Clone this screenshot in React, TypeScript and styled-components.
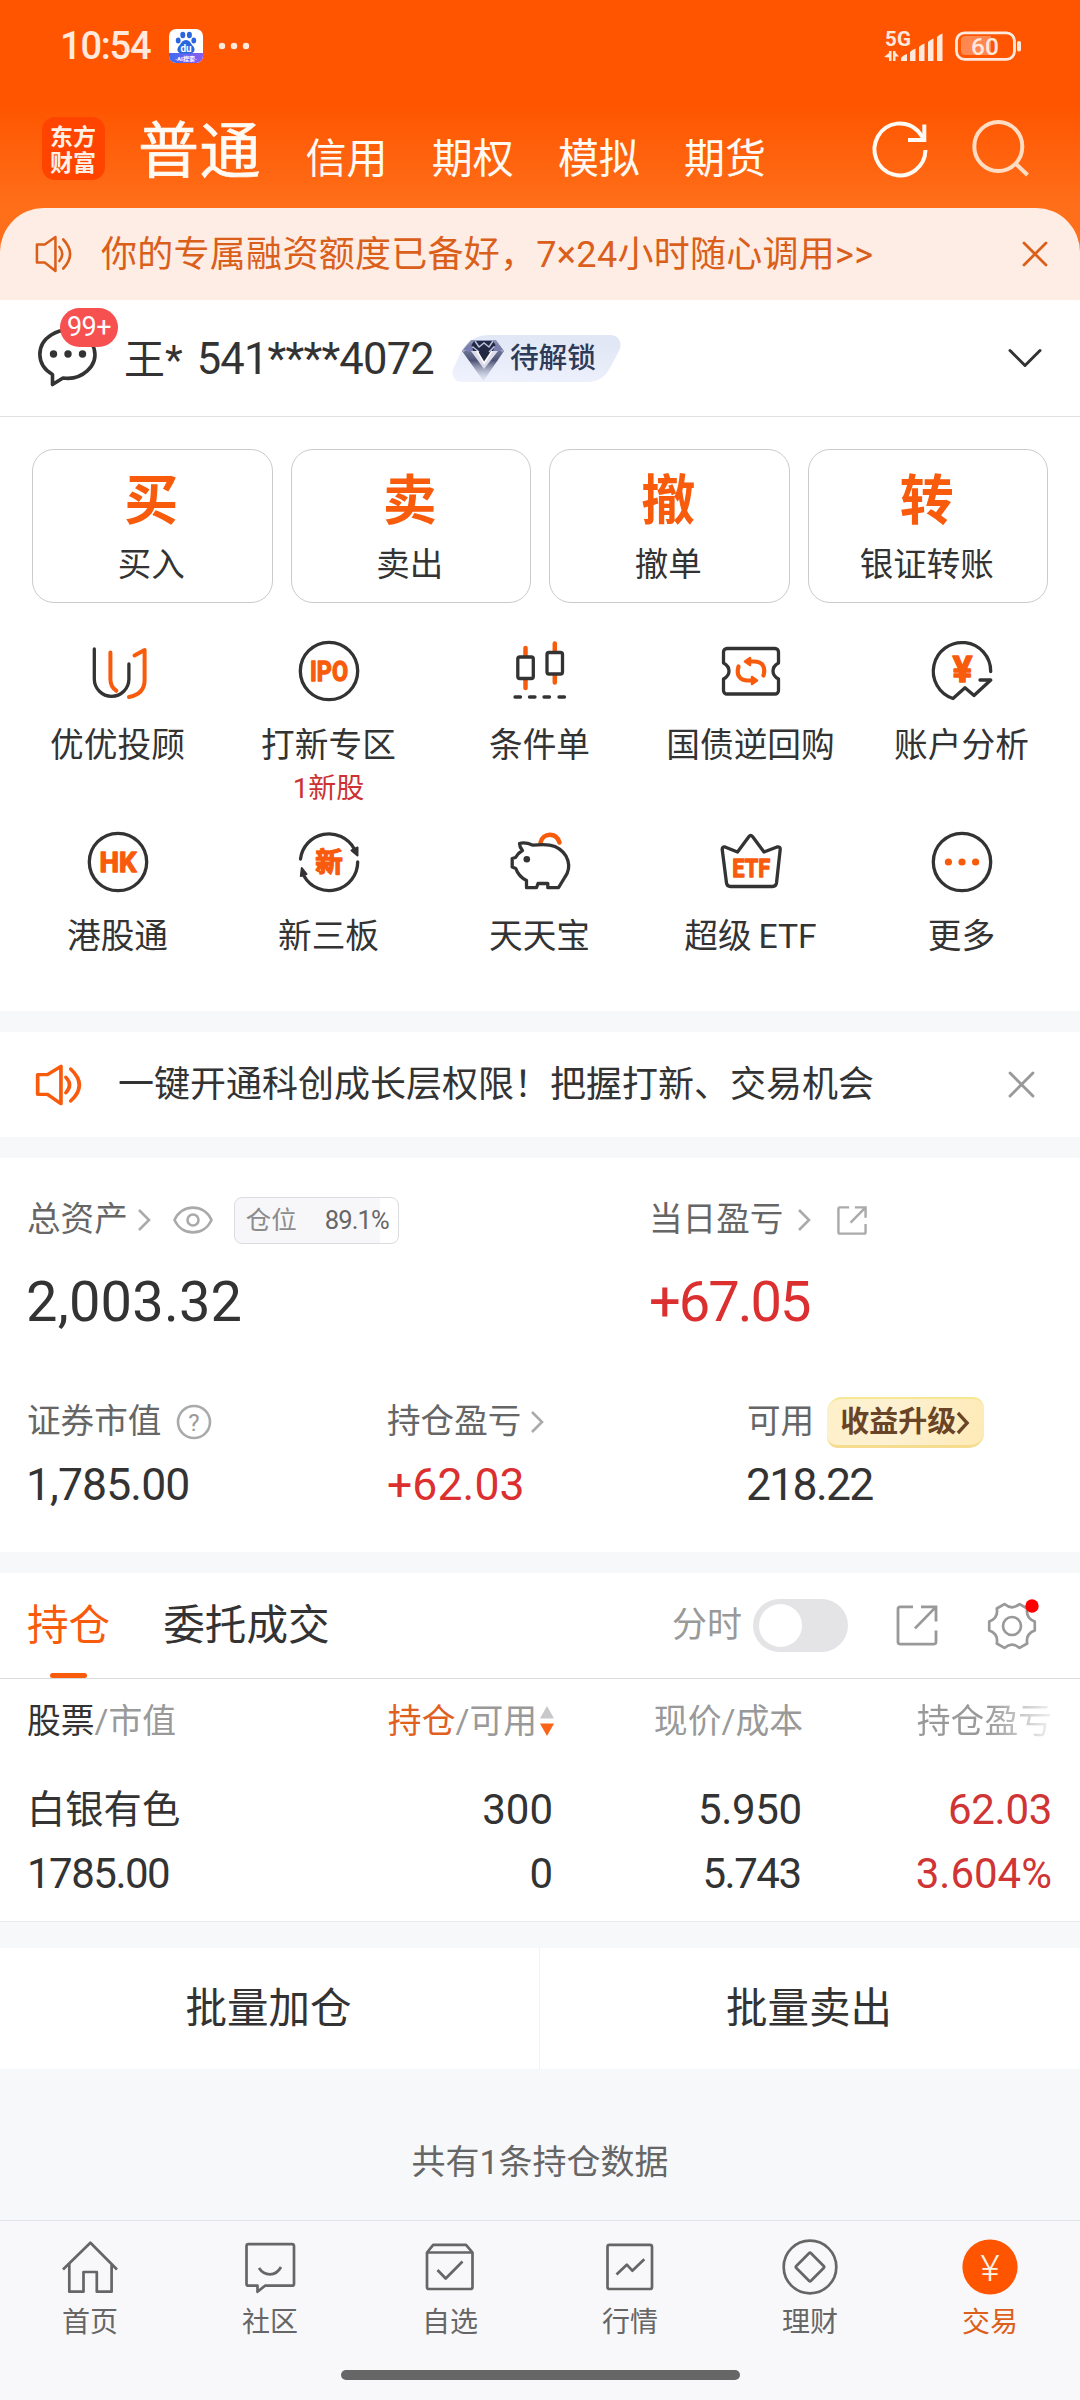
import React from 'react';
import styled, { createGlobalStyle } from 'styled-components';

const ORANGE = '#f85b0c';
const INK = '#333333';
const GRAY = '#666666';
const LIGHT = '#999999';
const RED = '#dc2f2f';
const FONT = `Roboto, "Noto Sans CJK SC", sans-serif`;

const GlobalStyle = createGlobalStyle`
  * { box-sizing: border-box; }
  body { margin: 0; background: #f7f8fa; }
`;

const Page = styled.main`
  width: 1080px;
  height: 2400px;
  display: flex;
  flex-direction: column;
  background: #f7f8fa;
  font-family: ${FONT};
  line-height: 1.3;
  color: ${INK};
  overflow: hidden;
  white-space: nowrap;
`;

const Icon = styled.svg<{ $w: number; $h: number; $ml?: number; $mt?: number }>`
  display: block;
  flex: none;
  width: ${p => p.$w}px;
  height: ${p => p.$h}px;
  margin-left: ${p => p.$ml ?? 0}px;
  margin-top: ${p => p.$mt ?? 0}px;
  overflow: visible;
  fill: none;
`;

const SvgText = styled.text<{ $size: number; $weight?: number }>`
  font-family: ${FONT};
  font-size: ${p => p.$size}px;
  font-weight: ${p => p.$weight ?? 700};
  text-anchor: middle;
`;

/* ---------- top area ---------- */

const Top = styled.header`
  flex: none;
  height: 300px;
  background: linear-gradient(#ff5500 0, #ff5500 104px, #ff6f1a 208px, #ff6d18 250px);
`;

const StatusBar = styled.div`
  height: 92px;
  padding: 0 58px 0 60px;
  display: flex;
  align-items: center;
  color: #ffe9dd;
`;

const Clock = styled.span`
  width: 109px;
  font-size: 38px;
  font-weight: 500;
  letter-spacing: -1.2px;
  line-height: 46px;
`;

const Spacer = styled.span`
  flex: 1;
`;

const NavRow = styled.nav`
  height: 116px;
  display: flex;
  align-items: flex-start;
  padding: 24px 50px 0 42px;
  color: #fffaf3;
`;

const Logo = styled.div`
  width: 63px;
  height: 63px;
  margin-top: 1px;
  padding: 5px 8px;
  border-radius: 13px;
  background: #ff4400;
  font: 700 23px/26px "Noto Sans CJK SC", sans-serif;
  white-space: normal;
  word-break: break-all;
  color: #fff0e6;
`;

const NavTabs = styled.div`
  display: flex;
  align-items: baseline;
  margin-left: 33px;
  margin-top: 2px;
  height: 66px;
`;

const NavTab = styled.span<{ $active?: boolean }>`
  width: ${p => (p.$active ? 167.5 : 126.2)}px;
  font-size: ${p => (p.$active ? 61 : 41)}px;
  font-weight: 400;
  -webkit-text-stroke: ${p => (p.$active ? 0.7 : 0)}px currentColor;
  letter-spacing: ${p => (p.$active ? 0.5 : 0)}px;
  line-height: 68px;
`;

const PromoBar = styled.div`
  height: 92px;
  padding: 0 33px 0 34px;
  border-radius: 44px 44px 0 0;
  background: #feede5;
  display: flex;
  align-items: center;
  color: #da5f1b;
`;

const NoticeText = styled.span<{ $ml: number; $ls?: number; $pt?: number }>`
  margin-left: ${p => p.$ml}px;
  padding-top: ${p => p.$pt ?? 0}px;
  font-size: 36px;
  line-height: 48px;
  letter-spacing: ${p => p.$ls ?? 0}px;
`;

/* ---------- account ---------- */

const AccountRow = styled.section`
  flex: none;
  height: 117px;
  padding: 0 38px 0 38px;
  background: #fff;
  border-bottom: 1px solid #e1e1e1;
  display: flex;
  align-items: center;
`;

const Chat = styled.div`
  position: relative;
  width: 64px;
  height: 60px;
`;

const Badge = styled.span`
  position: absolute;
  left: 22px;
  top: -20px;
  width: 58px;
  height: 39px;
  border-radius: 20px;
  background: #f75050;
  color: #fff;
  font-size: 27px;
  line-height: 39px;
  text-align: center;
  letter-spacing: -0.5px;
`;

const AccountName = styled.span`
  margin-left: 22px;
  padding-top: 3px;
  font-size: 41px;
  line-height: 56px;
`;

const AccountNumber = styled.span`
  margin-left: 4px;
  padding-top: 3px;
  font-size: 43.5px;
  letter-spacing: -0.8px;
  line-height: 56px;
`;

const VipTag = styled.div`
  position: relative;
  width: 170px;
  height: 47px;
  margin-left: 18px;
  display: flex;
  align-items: center;
  padding-left: 58px;
`;

const VipShape = styled(Icon)`
  position: absolute;
  left: 0;
  top: 0;
`;

const VipText = styled.span`
  position: relative;
  font-size: 28.7px;
  font-weight: 500;
  line-height: 40px;
  color: #2d3a58;
`;

/* ---------- trade actions ---------- */

const Actions = styled.section`
  flex: none;
  height: 594px;
  background: #fff;
  padding-top: 32px;
`;

const CardRow = styled.div`
  display: grid;
  grid-template-columns: repeat(4, 1fr);
  gap: 18px;
  padding: 0 32px;
`;

const Card = styled.button`
  height: 154px;
  border: 1px solid #cbcbcb;
  border-radius: 22px;
  background: #fff;
  padding: 19px 2px 0 0;
  display: flex;
  flex-direction: column;
  align-items: center;
  font-family: ${FONT};
  color: ${INK};
`;

const CardGlyph = styled.span`
  font-size: 54px;
  font-weight: 700;
  line-height: 66px;
  color: ${ORANGE};
`;

const CardLabel = styled.span`
  margin-top: 8px;
  font-size: 33.5px;
  line-height: 44px;
`;

const ShortcutGrid = styled.div`
  display: grid;
  grid-template-columns: repeat(5, 211px);
  grid-auto-rows: 191px;
  padding: 33px 0 0 12px;
`;

const Shortcut = styled.div`
  display: flex;
  flex-direction: column;
  align-items: center;
`;

const ShortcutLabel = styled.span`
  margin-top: 18px;
  font-size: 33.7px;
  line-height: 44px;
`;

const ShortcutNote = styled.span`
  margin-top: 1px;
  font-size: 28px;
  line-height: 40px;
  color: #cc3232;
`;

/* ---------- notice ---------- */

const Notice = styled.section`
  flex: none;
  height: 105px;
  margin: 21px 0;
  padding: 0 46px 0 34px;
  background: #fff;
  display: flex;
  align-items: center;
`;

/* ---------- assets ---------- */

const Assets = styled.section`
  flex: none;
  height: 394px;
  background: #fff;
  padding: 37px 28px 0 27px;
`;

const AssetsTop = styled.div`
  display: grid;
  grid-template-columns: 622px 1fr;
`;

const AssetsBottom = styled.div`
  display: grid;
  grid-template-columns: 360px 360px 1fr;
  margin-top: 59px;
`;

const LabelRow = styled.div<{ $h: number }>`
  height: ${p => p.$h}px;
  display: flex;
  align-items: center;
  font-size: 33.6px;
  color: ${GRAY};
`;

const Amount = styled.div<{ $size: number; $up?: boolean; $ls?: number; $mt: number }>`
  margin-top: ${p => p.$mt}px;
  margin-left: ${p => (p.$up ? 0 : -1)}px;
  font-size: ${p => p.$size}px;
  font-weight: 400;
  line-height: ${p => p.$size + 12}px;
  letter-spacing: ${p => p.$ls ?? 0}px;
  color: ${p => (p.$up ? RED : INK)};
`;

const PositionBox = styled.div`
  width: 165px;
  height: 47px;
  margin-left: 21px;
  border: 1px solid #dcdce0;
  border-radius: 8px;
  background: linear-gradient(90deg, #f7f7fa 89.1%, #fff 89.1%);
  display: flex;
  align-items: center;
  justify-content: space-between;
  padding: 1px 9px 0 11px;
  font-size: 25.5px;
  color: #8c8c8c;
`;

const PositionValue = styled.span`
  color: ${GRAY};
  letter-spacing: -0.9px;
`;

const UpgradeTag = styled.div`
  width: 157px;
  height: 51px;
  margin-left: 13px;
  padding: 2px 0 0 13px;
  border-radius: 15px 11px 15px 11px;
  border-bottom: 3px solid #f5dc8e;
  border-top: 2px solid #f6e795;
  background: linear-gradient(100deg, #fdf0c9, #fdf1d3 40%, #feeab6 100%);
  display: flex;
  align-items: center;
  font-size: 29px;
  font-weight: 700;
  color: #6a4426;
`;

/* ---------- holdings ---------- */

const Holdings = styled.section`
  flex: none;
  height: 349px;
  margin-top: 21px;
  background: #fff;
  border-bottom: 1px solid #e9eaec;
`;

const HoldingTabs = styled.div`
  height: 106px;
  padding: 0 44px 0 27px;
  border-bottom: 1px solid #d9dadb;
  display: flex;
  align-items: center;
`;

const HoldingTab = styled.span<{ $active?: boolean }>`
  position: relative;
  height: 105px;
  margin-right: 53px;
  font-size: 41.6px;
  line-height: 105px;
  color: ${p => (p.$active ? ORANGE : INK)};
`;

const Underline = styled.i`
  position: absolute;
  left: 23px;
  bottom: 0;
  width: 37px;
  height: 5px;
  border-radius: 3px;
  background: ${ORANGE};
`;

const SwitchLabel = styled.span`
  font-size: 35px;
  color: ${LIGHT};
`;

const Switch = styled.span`
  width: 95px;
  height: 53px;
  margin-left: 11px;
  padding: 5px 6px;
  border-radius: 27px;
  background: #e4e4e6;

  &::before {
    content: '';
    display: block;
    width: 43px;
    height: 43px;
    border-radius: 50%;
    background: #fff;
  }
`;

const TableRow = styled.div<{ $h: number; $size: number }>`
  height: ${p => p.$h}px;
  padding: 0 28px 0 27px;
  display: grid;
  grid-template-columns: 1fr 249px 249px 249px;
  align-items: center;
  font-size: ${p => p.$size}px;
`;

const HeadCell = styled.span<{ $right?: boolean }>`
  display: flex;
  align-items: center;
  justify-content: ${p => (p.$right ? 'flex-end' : 'flex-start')};
  color: ${LIGHT};
`;

const Fade = styled.span`
  background: linear-gradient(90deg, ${LIGHT} 52%, #eeeeee 98%);
  background-clip: text;
  -webkit-background-clip: text;
  color: transparent;
`;

const Dark = styled.span<{ $accent?: boolean }>`
  color: ${p => (p.$accent ? '#e0601e' : INK)};
`;

const StockName = styled.span`
  font-size: 38.3px;
  line-height: 36px;
`;

const NumberCell = styled.span<{ $left?: boolean; $up?: boolean; $ls?: number }>`
  text-align: ${p => (p.$left ? 'left' : 'right')};
  line-height: 36px;
  letter-spacing: ${p => p.$ls ?? 0}px;
  margin-right: ${p => (p.$up ? 0 : 1 - (p.$ls ?? 0))}px;
  color: ${p => (p.$up ? '#d03535' : INK)};
`;

const BatchRow = styled.section`
  flex: none;
  height: 121px;
  margin-top: 26px;
  background: #fff;
  display: grid;
  grid-template-columns: 1fr 1fr;
`;

const BatchButton = styled.button`
  border: 0;
  background: none;
  font-family: ${FONT};
  font-size: 41.5px;
  line-height: 54px;
  color: ${INK};
  padding: 1px 2px 0 0;

  &:first-child {
    border-right: 1px solid #f3f3f5;
  }
`;

const Summary = styled.p`
  margin: 0;
  height: 151px;
  padding-top: 68px;
  text-align: center;
  font-size: 34px;
  line-height: 50px;
  color: ${GRAY};
`;

/* ---------- bottom bar ---------- */

const BottomBar = styled.footer`
  flex: none;
  height: 180px;
  border-top: 1px solid #e1e4e6;
  background: #f8f8fa;
  display: flex;
  flex-direction: column;
  align-items: center;
`;

const BottomTabs = styled.div`
  width: 100%;
  height: 149px;
  display: grid;
  grid-template-columns: repeat(6, 1fr);
`;

const BottomTab = styled.div<{ $active?: boolean }>`
  display: flex;
  flex-direction: column;
  align-items: center;
  padding-top: 16px;
  font-size: 28px;
  line-height: 38px;
  color: ${p => (p.$active ? '#dd5f1c' : GRAY)};
`;

const BottomLabel = styled.span`
  margin-top: 7px;
`;

const HomeIndicator = styled.div`
  width: 399px;
  height: 10px;
  border-radius: 5px;
  background: #666;
`;

/* ---------- icons ---------- */

const Speaker = ({ w, h, sw, color }: { w: number; h: number; sw: number; color: string }) => (
  <Icon $w={w} $h={h} viewBox="0 0 40 40" preserveAspectRatio="none" stroke={color} strokeWidth={sw} strokeLinejoin="round" strokeLinecap="round">
    <path d="M3 10.5h8L22 3v34l-11-8.5H3z" />
    <path d="M26 13q6 7 0 14" />
    <path d="M30 5.5q14 14.5 0 29" />
  </Icon>
);

const Cross = ({ size, color }: { size: number; color: string }) => (
  <Icon $w={size} $h={size} viewBox="0 0 24 24" stroke={color} strokeWidth="2.8" strokeLinecap="round">
    <path d="M1 1L23 23M23 1L1 23" />
  </Icon>
);

const Chevron = ({ ml, color = '#aaaaaa', sw = 2.6, w = 12 }: { ml: number; color?: string; sw?: number; w?: number }) => (
  <Icon $w={w} $h={22} $ml={ml} viewBox="0 0 12 22" preserveAspectRatio="none" stroke={color} strokeWidth={sw}>
    <path d="M1 1L11 11L1 21" />
  </Icon>
);

const BaiduIcon = () => (
  <Icon $w={34} $h={34} viewBox="0 0 34 34">
    <defs>
      <linearGradient id="bd" x1="0" x2="1">
        <stop offset="0" stopColor="#3f6df2" />
        <stop offset="1" stopColor="#8a5cf0" />
      </linearGradient>
    </defs>
    <rect width="34" height="34" rx="7" fill="#fff" />
    <path d="M0 24h34v3a7 7 0 0 1-7 7H7a7 7 0 0 1-7-7z" fill="url(#bd)" />
    <g fill="#2a66e0">
      <ellipse cx="13.8" cy="6" rx="2.5" ry="3.3" />
      <ellipse cx="20.4" cy="6" rx="2.5" ry="3.3" />
      <ellipse cx="9.2" cy="11.6" rx="2.4" ry="3" />
      <ellipse cx="24.8" cy="11.6" rx="2.4" ry="3" />
      <path d="M17 11c4 0 5 4 7 6 3 3 1.500 7.500-3 7.500h-8c-4.500 0-6-4.500-3-7.500 2-2 3-6 7-6z" />
    </g>
    <SvgText x="17" y="22.500" $size={10} fill="#fff">du</SvgText>
    <SvgText x="17" y="32" $size={6} fill="#fff">·AI搜索·</SvgText>
  </Icon>
);

const SignalIcon = () => (
  <Icon $w={60} $h={34} viewBox="882 28 60 34" fill="currentColor">
    <SvgText x="897" y="44.500" $size={20.5} fill="currentColor" textLength="26">5G</SvgText>
    <g fill="currentColor">
      <path d="M888 50h2.500v10H888zM883 56l5-4v4.500zM892 50h2.500v10H892zM894 51l4 4.500h-4z" />
      <path d="M900 57q2-3 6-4v7h-6zM909 51q2-2.500 5.500-3.500V60H909zM918 46q2-2.500 5.500-3.500V60H918zM927 41q2-2.500 5.500-3.500V60H927zM936 36q2-2.500 5.500-3.500V60H936z" />
    </g>
  </Icon>
);

const BatteryIcon = () => (
  <Icon $w={67} $h={30} $ml={12} viewBox="954 31 67 30">
    <rect x="955.5" y="32.800" width="58" height="26.500" rx="8" stroke="currentColor" strokeWidth="2.800" />
    <path d="M964 36h26v19h-26a4 4 0 0 1-4-4V40a4 4 0 0 1 4-4z" fill="#ff8750" />
    <rect x="1016" y="41" width="4" height="10.500" rx="1.800" fill="currentColor" />
    <SvgText x="984" y="54.500" $size={24.5} $weight={500} fill="currentColor">60</SvgText>
  </Icon>
);

const VipDiamond = () => (
  <VipShape $w={170} $h={47} viewBox="0 0 170 47">
    <defs>
      <linearGradient id="vip" x1="0" x2="0.3" y1="1" y2="0">
        <stop offset="0" stopColor="#f0f3fe" />
        <stop offset="1" stopColor="#e1e7f5" />
      </linearGradient>
      <linearGradient id="gem" x1="0" x2="0" y1="0" y2="1">
        <stop offset="0" stopColor="#8f98bd" />
        <stop offset="0.5" stopColor="#4d5374" />
        <stop offset="1" stopColor="#cfd4ea" stopOpacity="0.3" />
      </linearGradient>
    </defs>
    <path d="M37 0H158C167 0 171 8 167 16L158 33C153 42 146 47 135 47H10C2 47-2 40 2 32L9 17C14 6 25 0 37 0z" fill="url(#vip)" />
    <path d="M19 5h25l8 11L31.500 46 10 16z" fill="url(#gem)" />
    <path d="M22 6h19l5 8-14 14-15-14z" fill="#232943" />
    <path d="M23 6l4 6 5-4 5 4 4-6M11 16l10-4 6 5M51 16l-9-4-5 5" stroke="#b9c1de" strokeWidth="1.500" />
    <path d="M11 15l8-6 3 9zM51 15l-7-6-4 9z" fill="#7a7fb0" />
    <path d="M19 16h6l7 12 8-12h6L32 34z" fill="#dcdcea" />
    <path d="M25 16l7 12 8-12" stroke="#fff" strokeWidth="1.500" />
  </VipShape>
);

const External = ({ w, h, ml, color, sw }: { w: number; h: number; ml: number; color: string; sw: number }) => (
  <Icon $w={w} $h={h} $ml={ml} viewBox="0 0 42 42" preserveAspectRatio="none" stroke={color} strokeWidth={sw}>
    <path d="M17 2H4a2 2 0 0 0-2 2V38a2 2 0 0 0 2 2H38a2 2 0 0 0 2-2V26" />
    <path d="M25 2H40V17M39 3L19 24" />
  </Icon>
);

const polar = (r: number, deg: number) =>
  `${(24 + r * Math.cos((deg * Math.PI) / 180)).toFixed(2)} ${(24 + r * Math.sin((deg * Math.PI) / 180)).toFixed(2)}`;

const gearPath =
  [0, 60, 120, 180, 240, 300]
    .map((a, i) => `${i ? 'L' : 'M'}${polar(23.2, a - 11)}L${polar(23.2, a + 11)}Q${polar(15.5, a + 30)} ${polar(23.2, a + 49)}`)
    .join('') + 'Z';

const shortcutIcon = (content: React.ReactNode) => (
  <Icon $w={70} $h={70} viewBox="0 0 70 70" stroke={INK} strokeWidth="3.300" strokeLinecap="round" strokeLinejoin="round">
    {content}
  </Icon>
);

const Word = styled(SvgText)`
  fill: ${ORANGE};
  stroke: ${ORANGE};
  stroke-width: 1.3;
`;

const shortcuts = [
  {
    label: '优优投顾',
    icon: (
      <>
        <path d="M11.300 13V43a17.300 17.300 0 0 0 34.600 0V28" />
        <g stroke={ORANGE} strokeWidth="4">
          <path d="M27.400 16.500V43q0 8 6 11.800" />
          <path d="M51.500 19.500L61.600 14V44q0 14-15.600 17" />
        </g>
      </>
    ),
  },
  {
    label: '打新专区',
    note: '1新股',
    icon: (
      <>
        <circle cx="35" cy="35" r="28.700" />
        <Word x="35" y="45" $size={27} textLength="38" lengthAdjust="spacingAndGlyphs">IPO</Word>
      </>
    ),
  },
  {
    label: '条件单',
    icon: (
      <>
        <path d="M20.500 12v8M20.500 44v8M49.800 7.500v8M49.800 39v7.500" stroke={ORANGE} strokeWidth="4.500" />
        <rect x="12.800" y="21" width="15.500" height="21.500" rx="2" />
        <rect x="42" y="16.500" width="15.500" height="21.500" rx="2" />
        <path d="M10 61h5.500M24.500 61h5.500M39 61h5.500M54 61h5.500" />
      </>
    ),
  },
  {
    label: '国债逆回购',
    icon: (
      <>
        <path d="M11 12.500H59a3.500 3.500 0 0 1 3.500 3.500V27q-5.500 3-5.500 8t5.500 8V54.500a3.500 3.500 0 0 1-3.500 3.500H11a3.500 3.500 0 0 1-3.500-3.500V43q5.500-3 5.500-8t-5.500-8V16a3.500 3.500 0 0 1 3.500-3.500z" />
        <g stroke={ORANGE} strokeWidth="4.200">
          <path d="M32 25.500h6c8 0 12 5 9.500 14" />
          <path d="M38 44.500h-6c-8 0-12-5-9.500-14" />
          <path d="M34 22l-5 3.500 5 3.500zM36 41l5 3.500-5 3.500z" fill={ORANGE} strokeWidth="2.500" />
        </g>
      </>
    ),
  },
  {
    label: '账户分析',
    icon: (
      <>
        <path d="M63.700 35.500A28.700 28.700 0 1 0 26 62.500L38 51.700L47 59.500L63.800 44H53" />
        <Word x="35.500" y="45.500" $size={36} textLength="20" lengthAdjust="spacingAndGlyphs">¥</Word>
      </>
    ),
  },
  {
    label: '港股通',
    icon: (
      <>
        <circle cx="35" cy="35" r="28.700" />
        <Word x="35" y="45" $size={27} textLength="37" lengthAdjust="spacingAndGlyphs">HK</Word>
      </>
    ),
  },
  {
    label: '新三板',
    icon: (
      <>
        <path d="M6.500 32A28.700 28.700 0 0 1 60 21.500" />
        <path d="M63.700 35A28.700 28.700 0 0 1 10 49" />
        <path d="M57.500 23.500l6-3v8zM6.800 49l1-8 4.700 6z" fill={INK} strokeWidth="2" />
        <Word x="35" y="45" $size={27.5}>新</Word>
      </>
    ),
  },
  {
    label: '天天宝',
    icon: (
      <>
        <path d="M35.500 15.500C38 5.500 51 5 54.500 15.500" stroke={ORANGE} strokeWidth="4.500" />
        <path d="M14.500 16.500C19 15 24 16.500 28 18.200C36 17.200 44 17 50 19.500C64 26 67 40 60 50L53.500 60.700H42.800V56.500H33L31.500 60.700H21.500V53.500C15.500 50.500 12.500 46.500 10.800 41.500L7.200 40V31.500L10.500 30.500Q13 26 17.500 23.500Q14.500 20 14.500 16.500z" />
        <circle cx="21.800" cy="32.300" r="3.300" fill={INK} stroke="none" />
      </>
    ),
  },
  {
    label: '超级\u2009ETF',
    icon: (
      <>
        <path d="M9 20L21.500 25L33 9.500Q34.700 7.500 36.500 9.500L48 25L61 20Q64.500 19.500 64.200 22.500L60.500 56Q60 59.500 56.500 59.500H14.500Q11 59.500 10.500 56L6.200 22.500Q6 19.500 9 20z" />
        <Word x="35.200" y="50" $size={26.5} textLength="38" lengthAdjust="spacingAndGlyphs">ETF</Word>
      </>
    ),
  },
  {
    label: '更多',
    icon: (
      <>
        <circle cx="35" cy="35" r="28.700" />
        <g fill={ORANGE} stroke="none">
          <circle cx="21.400" cy="35" r="3.600" />
          <circle cx="35" cy="35" r="3.600" />
          <circle cx="48.600" cy="35" r="3.600" />
        </g>
      </>
    ),
  },
];

const cards = [
  ['买', '买入'],
  ['卖', '卖出'],
  ['撤', '撤单'],
  ['转', '银证转账'],
];

const bottomTabs = [
  { label: '首页', icon: <path d="M3 32.500L30.400 5.700L57 32.500M9.300 27V54.700H23.500V35H36.800V54.700H51.600V27" /> },
  {
    label: '社区',
    icon: <path d="M8.500 7.200H52a2 2 0 0 1 2 2V46.700a2 2 0 0 1-2 2H25L17.500 54.800V48.700H8.500a2 2 0 0 1-2-2V9.200a2 2 0 0 1 2-2zM19 31Q23 37.300 30 37.300T41 30" />,
  },
  {
    label: '自选',
    icon: <path d="M7 15.500L13.200 7.800H46L52.500 15.500V50a2 2 0 0 1-2 2H9a2 2 0 0 1-2-2zH52.500M17.500 33L25.700 41.500L42.500 24.500" />,
  },
  {
    label: '行情',
    icon: <path d="M9.500 7.800H50a2 2 0 0 1 2 2V50a2 2 0 0 1-2 2H9.500a2 2 0 0 1-2-2V9.800a2 2 0 0 1 2-2zM16.500 37.500L26.800 27.700L32.300 33.700L44.300 22.200" />,
  },
  {
    label: '理财',
    icon: (
      <>
        <circle cx="30" cy="30" r="26.300" />
        <path d="M29 16.300q1-1 2 0L43.700 29q1 1 0 2L31 43.700q-1 1-2 0L16.300 31q-1-1 0-2z" />
      </>
    ),
  },
  {
    label: '交易',
    active: true,
    icon: (
      <>
        <circle cx="30" cy="30" r="27.600" fill="#ff5500" stroke="none" />
        <SvgText x="30" y="44" $size={37} $weight={300} fill="#fff3e6" stroke="none">¥</SvgText>
      </>
    ),
  },
];

export default function App() {
  return (
    <Page>
      <GlobalStyle />
      <Top>
        <StatusBar>
          <Clock>10:54</Clock>
          <BaiduIcon />
          <Icon $w={32} $h={8} $ml={15} viewBox="0 0 32 8">
            <g fill="currentColor">
              <circle cx="4" cy="4" r="3.200" />
              <circle cx="16" cy="4" r="3.200" />
              <circle cx="28" cy="4" r="3.200" />
            </g>
          </Icon>
          <Spacer />
          <SignalIcon />
          <BatteryIcon />
        </StatusBar>
        <NavRow>
          <Logo>东方财富</Logo>
          <NavTabs>
            <NavTab $active>普通</NavTab>
            <NavTab>信用</NavTab>
            <NavTab>期权</NavTab>
            <NavTab>模拟</NavTab>
            <NavTab>期货</NavTab>
          </NavTabs>
          <Spacer />
          <Icon $w={58} $h={60} $mt={2} viewBox="871 118 58 60" stroke="currentColor" strokeWidth="4">
            <path d="M925.500 150A25.500 26 0 1 1 918 131L924 139" />
            <path d="M924.300 124.500V140H908" />
          </Icon>
          <Icon $w={58} $h={60} $ml={43} $mt={2} viewBox="972 118 58 60" stroke="#ffdcc4" strokeWidth="4">
            <ellipse cx="998.300" cy="146.500" rx="24" ry="24.500" />
            <path d="M1015.500 163.500L1027.500 175" />
          </Icon>
        </NavRow>
        <PromoBar>
          <Speaker w={39} h={40} sw={2.6} color="#da5f1b" />
          <NoticeText $ml={28} $ls={0.28} $pt={2}>你的专属融资额度已备好，7×24小时随心调用&gt;&gt;</NoticeText>
          <Spacer />
          <Cross size={24} color="#da5f1b" />
        </PromoBar>
      </Top>

      <AccountRow>
        <Chat>
          <Icon $w={64} $h={60} viewBox="38 328 64 60" stroke={INK} strokeWidth="3.600" strokeLinejoin="round">
            <path d="M52.500 374.500A27.500 24 0 1 1 63 378L52.500 384.500z" />
            <g fill={INK} stroke="none">
              <circle cx="53.500" cy="354" r="3.700" />
              <circle cx="68" cy="354" r="3.700" />
              <circle cx="82.500" cy="354" r="3.700" />
            </g>
          </Icon>
          <Badge>99+</Badge>
        </Chat>
        <AccountName>王*</AccountName>
        <AccountNumber>&nbsp;541****4072</AccountNumber>
        <VipTag>
          <VipDiamond />
          <VipText>待解锁</VipText>
        </VipTag>
        <Spacer />
        <Icon $w={34} $h={18} viewBox="0 0 34 18" stroke={INK} strokeWidth="3" strokeLinecap="round" strokeLinejoin="round">
          <path d="M2 1.500L17 16.500L32 1.500" />
        </Icon>
      </AccountRow>

      <Actions>
        <CardRow>
          {cards.map(([glyph, label]) => (
            <Card key={label}>
              <CardGlyph>{glyph}</CardGlyph>
              <CardLabel>{label}</CardLabel>
            </Card>
          ))}
        </CardRow>
        <ShortcutGrid>
          {shortcuts.map(s => (
            <Shortcut key={s.label}>
              {shortcutIcon(s.icon)}
              <ShortcutLabel>{s.label}</ShortcutLabel>
              {s.note && <ShortcutNote>{s.note}</ShortcutNote>}
            </Shortcut>
          ))}
        </ShortcutGrid>
      </Actions>

      <Notice>
        <Speaker w={49} h={44} sw={3} color={ORANGE} />
        <NoticeText $ml={35}>一键开通科创成长层权限！把握打新、交易机会</NoticeText>
        <Spacer />
        <Cross size={25} color="#999" />
      </Notice>

      <Assets>
        <AssetsTop>
          <div>
            <LabelRow $h={50}>
              总资产
              <Chevron ml={10} />
              <Icon $w={40} $h={28} $ml={23} viewBox="0 0 40 28" stroke="#aaaaaa" strokeWidth="2.600">
                <path d="M1.500 14C9-2.500 31-2.500 38.500 14C31 30.500 9 30.500 1.500 14z" />
                <circle cx="20" cy="14" r="5.500" />
              </Icon>
              <PositionBox>
                <span>仓位</span>
                <PositionValue>89.1%</PositionValue>
              </PositionBox>
            </LabelRow>
            <Amount $size={56} $mt={23} $ls={0.2}>2,003.32</Amount>
          </div>
          <div>
            <LabelRow $h={50}>
              当日盈亏
              <Chevron ml={15} />
              <External w={30} h={29} ml={27} color="#aaaaaa" sw={3.4} />
            </LabelRow>
            <Amount $size={56} $mt={23} $up $ls={-2}>+67.05</Amount>
          </div>
        </AssetsTop>
        <AssetsBottom>
          <div>
            <LabelRow $h={54}>
              证券市值
              <Icon $w={36} $h={36} $ml={15} viewBox="0 0 36 36" stroke="#aaaaaa" strokeWidth="2.600">
                <circle cx="18" cy="18" r="16" />
                <SvgText x="18" y="26.500" $size={24} $weight={400} fill="#999" stroke="none">?</SvgText>
              </Icon>
            </LabelRow>
            <Amount $size={44.5} $mt={8} $ls={-0.9}>1,785.00</Amount>
          </div>
          <div>
            <LabelRow $h={54}>
              持仓盈亏
              <Chevron ml={10} />
            </LabelRow>
            <Amount $size={44.5} $mt={8} $up $ls={0.1}>+62.03</Amount>
          </div>
          <div>
            <LabelRow $h={54}>
              可用
              <UpgradeTag>
                收益升级
                <Chevron ml={1} color="#6a4426" sw={3.6} w={11} />
              </UpgradeTag>
            </LabelRow>
            <Amount $size={44.5} $mt={8} $ls={-1.7}>218.22</Amount>
          </div>
        </AssetsBottom>
      </Assets>

      <Holdings>
        <HoldingTabs>
          <HoldingTab $active>
            持仓
            <Underline />
          </HoldingTab>
          <HoldingTab>委托成交</HoldingTab>
          <Spacer />
          <SwitchLabel>分时</SwitchLabel>
          <Switch />
          <External w={42} h={41} ml={48} color="#999999" sw={2.8} />
          <Icon $w={48} $h={48} $ml={50} viewBox="0 0 48 48" stroke="#999999" strokeWidth="2.700" strokeLinejoin="round">
            <path d={gearPath} />
            <circle cx="24" cy="24" r="9" />
            <circle cx="44" cy="4" r="6.700" fill="#ff0000" stroke="none" />
          </Icon>
        </HoldingTabs>
        <TableRow $h={85} $size={33.8}>
          <HeadCell>
            <Dark>股票</Dark>/市值
          </HeadCell>
          <HeadCell $right>
            <Dark $accent>持仓</Dark>/可用
            <Icon $w={14} $h={32} $ml={3} viewBox="0 0 14 32">
              <path d="M7 1L14 13.500H0z" fill="#c8c8ca" />
              <path d="M7 31L0 18.500H14z" fill="#fa6418" />
            </Icon>
          </HeadCell>
          <HeadCell $right>现价/成本</HeadCell>
          <HeadCell $right>
            <Fade>持仓盈亏</Fade>
          </HeadCell>
        </TableRow>
        <TableRow $h={92} $size={42}>
          <StockName>白银有色</StockName>
          <NumberCell>300</NumberCell>
          <NumberCell $ls={-0.4}>5.950</NumberCell>
          <NumberCell $up $ls={-0.3}>62.03</NumberCell>
        </TableRow>
        <TableRow $h={36} $size={42}>
          <NumberCell $left $ls={-1.5}>1785.00</NumberCell>
          <NumberCell>0</NumberCell>
          <NumberCell $ls={-1.5}>5.743</NumberCell>
          <NumberCell $up>3.604%</NumberCell>
        </TableRow>
      </Holdings>

      <BatchRow>
        <BatchButton>批量加仓</BatchButton>
        <BatchButton>批量卖出</BatchButton>
      </BatchRow>
      <Summary>共有1条持仓数据</Summary>

      <BottomBar>
        <BottomTabs>
          {bottomTabs.map(t => (
            <BottomTab key={t.label} $active={t.active}>
              <Icon $w={60} $h={60} viewBox="0 0 60 60" stroke={GRAY} strokeWidth="2.700" strokeLinejoin="round">
                {t.icon}
              </Icon>
              <BottomLabel>{t.label}</BottomLabel>
            </BottomTab>
          ))}
        </BottomTabs>
        <HomeIndicator />
      </BottomBar>
    </Page>
  );
}
